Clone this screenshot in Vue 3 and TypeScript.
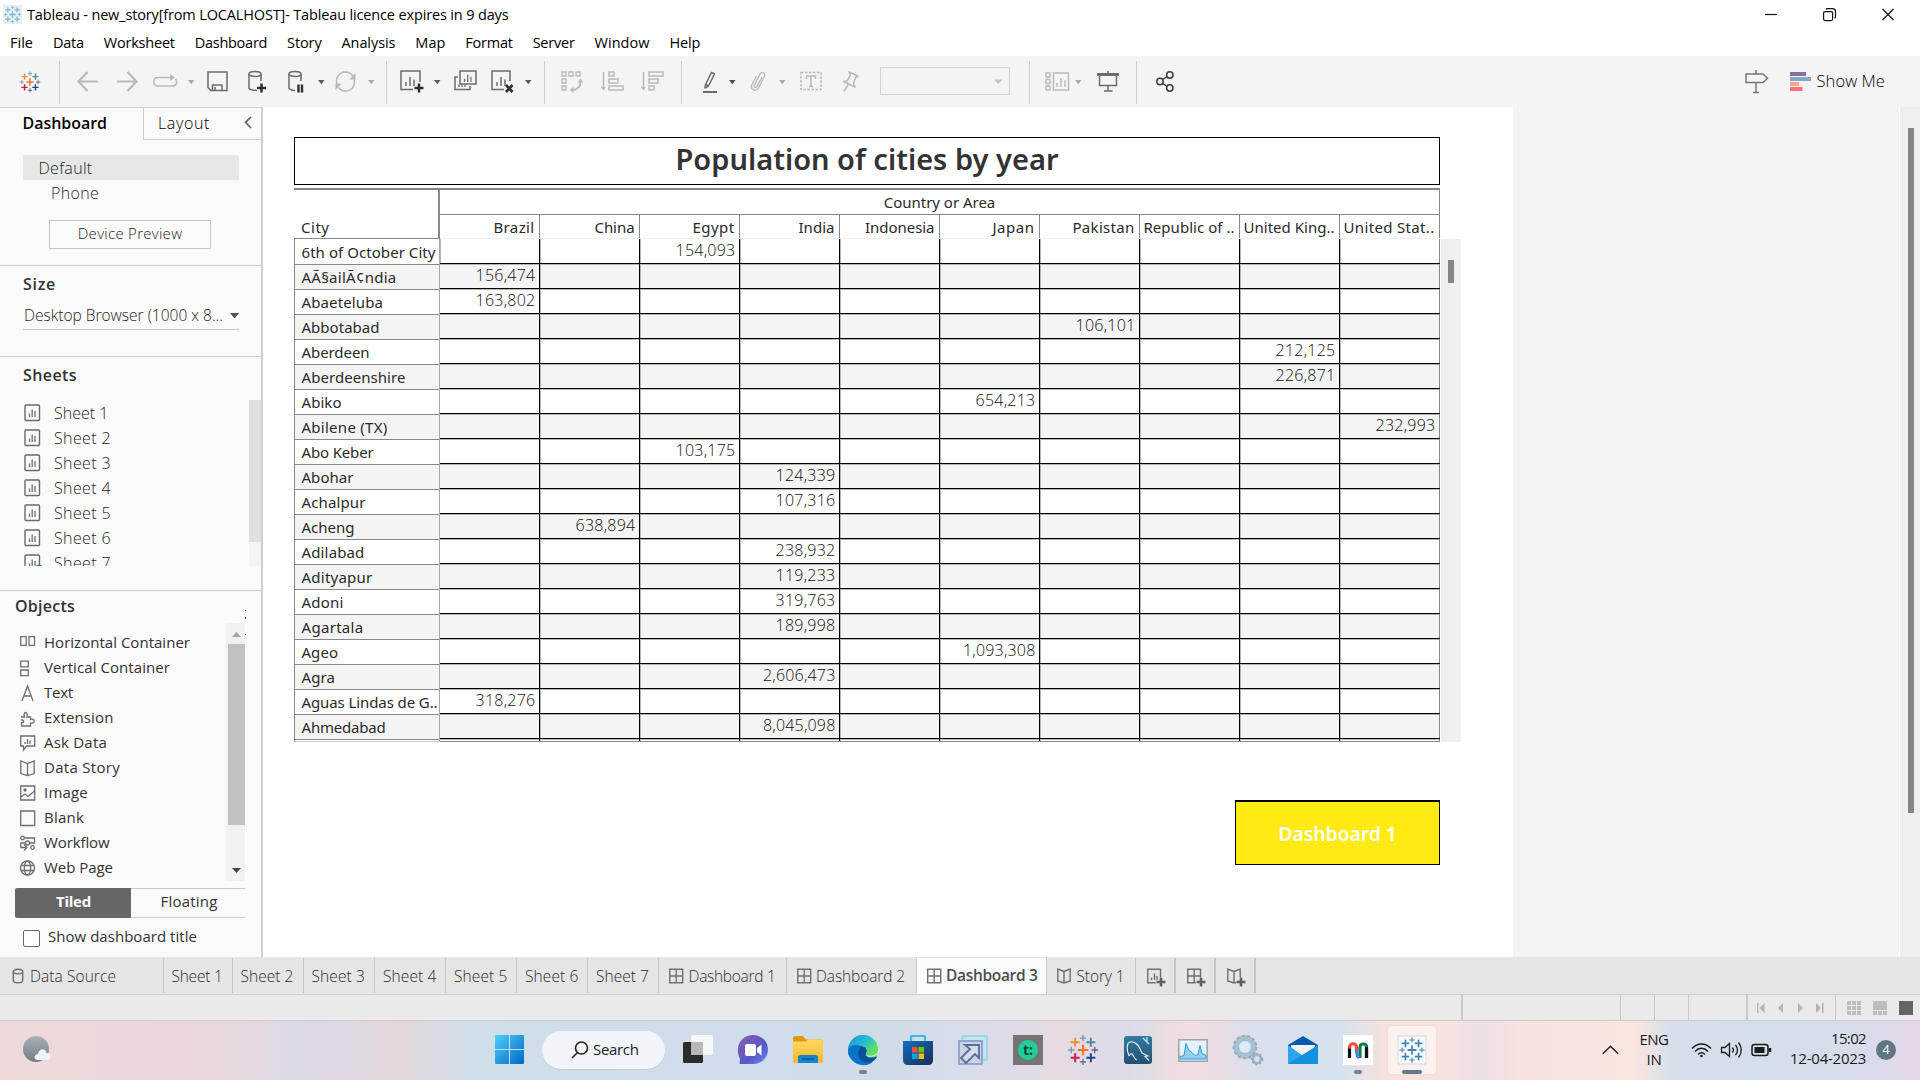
<script setup lang="ts">
// Tightens or loosens a label's tracking so that it fills its design width.
const vFit = {
  mounted(el: HTMLElement, binding: { value: number }) {
    const count = (el.textContent ?? '').length
    if (!binding.value || count < 2) return
    el.style.letterSpacing = '0px'
    const natural = el.getBoundingClientRect().width
    el.style.letterSpacing = ((binding.value - natural) / count).toFixed(3) + 'px'
  },
}

type Label = { t: string; w: number }

const menus: Label[] = [
  { t: 'File', w: 23 }, { t: 'Data', w: 31 }, { t: 'Worksheet', w: 71 }, { t: 'Dashboard', w: 72.5 },
  { t: 'Story', w: 34.5 }, { t: 'Analysis', w: 54 }, { t: 'Map', w: 30 }, { t: 'Format', w: 47.5 },
  { t: 'Server', w: 42 }, { t: 'Window', w: 55 }, { t: 'Help', w: 31 },
]

function plus(x: number, y: number, r: number, color: string, sw: number) {
  return `<path d="M${x - r} ${y}h${r * 2}M${x} ${y - r}v${r * 2}" stroke="${color}" stroke-width="${sw}" fill="none"/>`
}
function logo(cx: number, cy: number, s: number, c: string[]) {
  return (
    plus(cx, cy, 5.4 * s, c[0], 2.2 * s) +
    plus(cx - 8 * s, cy - 8 * s, 4.6 * s, c[1], 2 * s) + plus(cx + 8 * s, cy - 8 * s, 4.6 * s, c[2], 2 * s) +
    plus(cx - 8 * s, cy + 8 * s, 4.6 * s, c[3], 2 * s) + plus(cx + 8 * s, cy + 8 * s, 4.6 * s, c[4], 2 * s) +
    plus(cx, cy - 12.2 * s, 3.2 * s, c[5], 1.3 * s) + plus(cx - 12 * s, cy, 3.2 * s, c[6], 1.3 * s) +
    plus(cx + 12 * s, cy, 3.2 * s, c[7], 1.3 * s) + plus(cx, cy + 12.2 * s, 3.2 * s, c[8], 1.3 * s)
  )
}
const brand = ['#ee762e', '#eb9129', '#59879b', '#c8203f', '#1f447e', '#7099a6', '#7099a6', '#5b6591', '#5b6591']
const blue = Array(9).fill('#3f88b5')
const pale = Array(9).fill('#7fb4d6')

const G = '#6b6b6b'
const L = '#b9b9b9'
const D = '#2e2e2e'
const bars = (x: number, y: number, c: string, k = 1) =>
  `<path d="M${x} ${y - 4 * k}v${4 * k}M${x + 4 * k} ${y - 9 * k}v${9 * k}M${x + 8 * k} ${y - 6.5 * k}v${6.5 * k}" stroke="${c}" stroke-width="${1.5 * k}" fill="none"/>`
const caret = (c: string) => `<path d="M0 10h6.500l-3.200 4.200z" fill="${c}"/>`
const sep = '<path d="M.5 -9v43" stroke="#cfcfcf"/>'

// Toolbar glyphs: x is the left edge inside the bar, w the glyph width.
const tools = [
  { x: 20, w: 20, g: logo(10, 12, 0.68, brand) },
  { x: 59, w: 1, g: sep },
  { x: 77, w: 21, g: `<path d="M21 11.500H1.500M10.500 2L1.500 11.500l9 9.500" stroke="${L}" stroke-width="2.200" fill="none"/>` },
  { x: 117, w: 21, g: `<path d="M0 11.500h19.500M10.500 2l9 9.500-9 9.500" stroke="${L}" stroke-width="2.200" fill="none"/>` },
  { x: 153, w: 25, g: `<path d="M22.500 9c2.500 3 1 7-3 7H5C-.5 16-.5 7.500 5 7.500h14" stroke="${L}" stroke-width="1.500" fill="none"/><path d="M17 4l5 3.500-5 3.500z" fill="${L}"/>` },
  { x: 188, w: 7, g: caret('#ababab') },
  { x: 207, w: 21, g: `<path d="M1 2h19v18.500H4L1 17.500z" stroke="${G}" stroke-width="1.500" fill="none"/><path d="M5.500 20v-5h9.500v5M8 20v-3" stroke="${G}" stroke-width="1.500" fill="none"/>` },
  { x: 248, w: 18, g: `<path d="M13 11V4M1 4v14.500C3 20.500 5 20.500 9 20.500" stroke="${G}" stroke-width="1.500" fill="none"/><ellipse cx="7" cy="4" rx="6" ry="2.500" stroke="${G}" stroke-width="1.500" fill="none"/><path d="M13.500 13.500v9M9 18h9" stroke="${D}" stroke-width="2.500"/>` },
  { x: 288, w: 16, g: `<path d="M13 11V4M1 4v14.500C3 20.500 4 20.500 7 20.500" stroke="${G}" stroke-width="1.500" fill="none"/><ellipse cx="7" cy="4" rx="6" ry="2.500" stroke="${G}" stroke-width="1.500" fill="none"/><path d="M10.500 14.500v8M14 14.500v8" stroke="${D}" stroke-width="2.400"/>` },
  { x: 318, w: 7, g: caret('#5a5a5a') },
  { x: 335, w: 21, g: `<path d="M2 14A9 9 0 0 1 18 6M19 9a9 9 0 0 1-16 8" stroke="${L}" stroke-width="1.600" fill="none"/><path d="M20.500 3v6.500H14.500zM.5 20v-6.500H6.500z" fill="${L}"/>` },
  { x: 368, w: 7, g: caret('#ababab') },
  { x: 386, w: 1, g: sep },
  { x: 400, w: 24, g: `<path d="M20 12V1H1v18.500h12" stroke="${G}" stroke-width="1.500" fill="none"/>${bars(6, 16, G)}<path d="M19 13.500v9M14.500 18h9" stroke="${D}" stroke-width="2.500"/>` },
  { x: 434, w: 7, g: caret('#5a5a5a') },
  { x: 454, w: 23, g: `<path d="M6 1h16v13H6z" stroke="${G}" stroke-width="1.500" fill="none"/><path d="M4 7H1v12.500h15V16" stroke="${G}" stroke-width="1.500" fill="none"/>${bars(10.500, 12, G, 0.8)}<path d="M5 17v-2.500M8 17v-2.500M11 17v-2.500" stroke="${G}" stroke-width="1.300"/>` },
  { x: 491, w: 24, g: `<path d="M19 11V1H1v18.500h12" stroke="${G}" stroke-width="1.500" fill="none"/>${bars(6, 16, G)}<path d="M15 15l6.500 7M21.500 15l-6.500 7" stroke="${D}" stroke-width="2.600"/>` },
  { x: 525, w: 7, g: caret('#5a5a5a') },
  { x: 544, w: 1, g: sep },
  { x: 561, w: 22, g: `<path d="M1 2h4v4H1zM8 2h4v4H8zM15 2h4v4h-4zM1 9h4v4H1zM1 16h4v4H1z" stroke="${L}" stroke-width="1.300" fill="none"/><path d="M19.500 12c0 5-3 7.500-8 8" stroke="${L}" stroke-width="1.800" fill="none"/><path d="M16.500 12.500l3.200-4 2.500 4zM12.500 17l-4 3 4 2.800z" fill="${L}"/>` },
  { x: 601, w: 23, g: `<path d="M2.500 2v17" stroke="${L}" stroke-width="1.500"/><path d="M0 17h5l-2.500 3.500z" fill="${L}"/><path d="M8 2h5v4H8zM8 9h9v4H8zM8 16h14v4H8z" stroke="${L}" stroke-width="1.500" fill="none"/>` },
  { x: 641, w: 23, g: `<path d="M2.500 2v17" stroke="${L}" stroke-width="1.500"/><path d="M0 17h5l-2.500 3.500z" fill="${L}"/><path d="M8 2h14v4H8zM8 9h9v4H8zM8 16h5v4H8z" stroke="${L}" stroke-width="1.500" fill="none"/>` },
  { x: 681, w: 1, g: sep },
  { x: 703, w: 16, g: `<path d="M2.500 14.500L8.500 2.500l3 1.500-6 12zM2.500 14.500L2 18l3.500-2" stroke="${G}" stroke-width="1.500" fill="none" stroke-linejoin="round"/><path d="M0 22h14" stroke="${G}" stroke-width="2"/>` },
  { x: 729, w: 7, g: caret('#4a4a4a') },
  { x: 750, w: 17, g: `<path d="M12 7l-5 9.500c-1 1.800-3.500.5-2.500-1.500L10 4c1.500-3 6-.8 4.500 2.300L8.500 18c-2.500 4.500-9 1.500-6.500-3.500L6.500 6" stroke="${L}" stroke-width="1.400" fill="none"/>` },
  { x: 779, w: 7, g: caret('#ababab') },
  { x: 800, w: 22, g: `<path d="M1 2.500h20v17H1z" stroke="${L}" stroke-width="1.500" stroke-dasharray="2.500 1.500" fill="none"/><path d="M6.500 9V6h9v3M11 6v10.500M9 16.500h4" stroke="${L}" stroke-width="1.500" fill="none"/>` },
  { x: 842, w: 17, g: `<path d="M7 2l9 4-2.500 1.500-2 6L13 17 1.500 11.500l4-.8 3-6zM6.500 14L2 21.500" stroke="${L}" stroke-width="1.500" fill="none" stroke-linejoin="round"/>` },
  { x: 880, w: 130, g: `<path d="M.5 -2.500h129v27H.5z" stroke="#d2d2d2" fill="none"/><path d="M114 9.500h8.500l-4.200 4.500z" fill="#c4c4c4"/>` },
  { x: 1029, w: 1, g: sep },
  { x: 1045, w: 24, g: `<path d="M1 3h4v4H1zM1 9.500h4v4H1zM1 16h4v4H1zM8.500 3H23.500v17H8.500z" stroke="${L}" stroke-width="1.400" fill="none"/>${bars(12, 17, L)}` },
  { x: 1075, w: 7, g: caret('#ababab') },
  { x: 1097, w: 22, g: `<path d="M0 4.500h22" stroke="${G}" stroke-width="3"/><path d="M11 1v3M2.500 5v10.500h17V5M11 15.500V21M7 21h8.500" stroke="${G}" stroke-width="1.500" fill="none"/>` },
  { x: 1136, w: 1, g: sep },
  { x: 1156, w: 18, g: `<g stroke="#3c3c3c" stroke-width="1.500" fill="none"><circle cx="4" cy="11.500" r="3.200"/><circle cx="13.800" cy="5" r="3.200"/><circle cx="13.800" cy="18" r="3.200"/><path d="M6.700 9.500l4.500-3M6.700 13.500l4.500 3"/></g>` },
].map((t, i, all) => ({ ...t, gap: i ? t.x - all[i - 1].x - all[i - 1].w : t.x }))

const sheets = [1, 2, 3, 4, 5, 6, 7].map((n) => ({ t: 'Sheet ' + n, w: n === 1 ? 54.5 : 57 }))

const objects = [
  { t: 'Horizontal Container', w: 146, g: '<path d="M.7 1.700h5.500v8.600H.7zM9 1.700h5.500v8.600H9z"/>' },
  { t: 'Vertical Container', w: 126, g: '<path d="M.7 1.200h7.600v5.600H.7zM.7 10h7.600v5.600H.7z"/>' },
  { t: 'Text', w: 29, g: '<path d="M2 16L7.500 1 13 16M4 11h7"/>' },
  { t: 'Extension', w: 69.5, g: '<path d="M1 7h3.500C2.500 1 8.500 1 7 7h3.500v2.500c5-2 5 5 0 3.500v3H1.500v-3.500c3 1 3-3.500-.8-2.500"/>' },
  { t: 'Ask Data', w: 63, g: '<path d="M.7 1h14v10H6.500L3.500 15v-4H.7zM5 9V7M7.500 9V4M10 9V5.500"/>' },
  { t: 'Data Story', w: 76, g: '<path d="M7.500 3.500L.8 1v12.500l6.700 2 6.700-2V1zM7.500 3.500v12"/>' },
  { t: 'Image', w: 44, g: '<path d="M.7 1h14v14H.7zM.7 12l4.300-3 3 2.500L14.500 6"/><circle cx="5" cy="5" r="1" fill="#666"/>' },
  { t: 'Blank', w: 40, g: '<path d="M.7 1h14v14.500H.7z"/>' },
  { t: 'Workflow', w: 65.5, g: '<circle cx="2.500" cy="3" r="1.800"/><circle cx="7.500" cy="8" r="2"/><circle cx="12.500" cy="12.500" r="1.800"/><path d="M4.500 3h10v5h-5M5.500 8H.8v4.500h5M4 9.500l3 3-3 3"/>' },
  { t: 'Web Page', w: 69, g: '<circle cx="7.500" cy="8" r="7"/><ellipse cx="7.500" cy="8" rx="3.200" ry="7"/><path d="M1.300 5.500h12.500M1.300 10.500h12.500"/>' },
]

const columns: Label[] = [
  { t: 'Brazil', w: 41 }, { t: 'China', w: 40 }, { t: 'Egypt', w: 42 }, { t: 'India', w: 36 },
  { t: 'Indonesia', w: 69.5 }, { t: 'Japan', w: 42 }, { t: 'Pakistan', w: 62 },
  { t: 'Republic of ..', w: 91 }, { t: 'United King..', w: 91 }, { t: 'United Stat..', w: 91 },
]
type Row = { city: string; w: number; col: number; value: string }
const rows: Row[] = ([
  ['6th of October City', 134, 2, '154,093'],
  ['AÃ§ailÃ¢ndia', 95, 0, '156,474'],
  ['Abaeteluba', 81.5, 0, '163,802'],
  ['Abbotabad', 78, 6, '106,101'],
  ['Aberdeen', 68, 8, '212,125'],
  ['Aberdeenshire', 104, 8, '226,871'],
  ['Abiko', 40, 5, '654,213'],
  ['Abilene (TX)', 86, 9, '232,993'],
  ['Abo Keber', 72, 2, '103,175'],
  ['Abohar', 52, 3, '124,339'],
  ['Achalpur', 64, 3, '107,316'],
  ['Acheng', 53, 1, '638,894'],
  ['Adilabad', 63, 3, '238,932'],
  ['Adityapur', 71, 3, '119,233'],
  ['Adoni', 42, 3, '319,763'],
  ['Agartala', 62, 3, '189,998'],
  ['Ageo', 36.5, 5, '1,093,308'],
  ['Agra', 33.5, 3, '2,606,473'],
  ['Aguas Lindas de G..', 136, 0, '318,276'],
  ['Ahmedabad', 84, 3, '8,045,098'],
] as [string, number, number, string][]).map(([city, w, col, value]) => ({ city, w, col, value }))

const gridIcon = '<path d="M.7 1.200h13v13.600H.7zM7.200 1.200v13.600M.7 8h13"/>'
const bookIcon = '<path d="M7 3.500L.8 1v12l6.200 2 6.200-2V1zM7 3.500v11.500"/>'
const sourceIcon = '<ellipse cx="6" cy="3.500" rx="4.700" ry="2.200"/><path d="M1.300 3.500v9c0 3 9.400 3 9.400 0v-9"/>'
// Bottom tabs: box width, padding before the content, glyph, label.
const tabs = [
  { w: 164, pad: 12, icon: sourceIcon, t: 'Data Source', tw: 86, gap: 3, on: false },
  { w: 69, pad: 7.5, icon: '', t: 'Sheet 1', tw: 51, gap: 0, on: false },
  { w: 71, pad: 7.5, icon: '', t: 'Sheet 2', tw: 53, gap: 0, on: false },
  { w: 71, pad: 7.5, icon: '', t: 'Sheet 3', tw: 53.5, gap: 0, on: false },
  { w: 71, pad: 8, icon: '', t: 'Sheet 4', tw: 53.5, gap: 0, on: false },
  { w: 71, pad: 8, icon: '', t: 'Sheet 5', tw: 53.5, gap: 0, on: false },
  { w: 71, pad: 8, icon: '', t: 'Sheet 6', tw: 53.5, gap: 0, on: false },
  { w: 71, pad: 8, icon: '', t: 'Sheet 7', tw: 53, gap: 0, on: false },
  { w: 128, pad: 10, icon: gridIcon, t: 'Dashboard 1', tw: 87, gap: 4.5, on: false },
  { w: 130, pad: 10, icon: gridIcon, t: 'Dashboard 2', tw: 89, gap: 4, on: false },
  { w: 130, pad: 10, icon: gridIcon, t: 'Dashboard 3', tw: 91.5, gap: 4, on: true },
  { w: 89, pad: 10, icon: bookIcon, t: 'Story 1', tw: 48, gap: 4.5, on: false },
]
const bold = '<path d="M14 9.500v9M9.500 14h9" stroke="#606060" stroke-width="2.600"/>'
const addTabs = [
  '<path d="M13.500 9V1.200H.7v13.600h8M4.500 12V9.500M7.500 12V5.500M10 12V8"/>' + bold,
  '<path d="M13.500 9V1.200H.7v13.600h8M7.200 1.200V14M.7 8h13"/>' + bold,
  '<path d="M7 3.500L.8 1v12l6.200 2 2-.5M7 3.500L13.200 1v8M7 3.500v11.500"/>' + bold,
]

const apps = [
  // task view
  '<rect x="0" y="7" width="20" height="21" rx="1.500" fill="#2b2b2b"/><rect x="8" y="0" width="22" height="20" rx="1.500" fill="#f7f7f7"/><path d="M8 7h12v13H8z" fill="#b7b7b7"/>',
  // chat
  '<path d="M15 0c8 0 15 6 15 14.500S23 29 15 29H1.500L2 24C-4 12 3 0 15 0z" fill="url(#chat)"/><rect x="7" y="9" width="11" height="12" rx="2" fill="#fff"/><path d="M19 13l4.500-3.500v11L19 17z" fill="#fff"/>',
  // explorer
  '<path d="M0 3q0-2 2-2h8l3 3.500h15q2 0 2 2V10H0z" fill="#dd9b05"/><path d="M0 6.500h13l2-2h13q2 0 2 2V26q0 2-2 2H2q-2 0-2-2z" fill="url(#folder)"/><path d="M5 28v-6q0-2 2-2h16q2 0 2 2v6z" fill="#1583cf"/><path d="M9 24h12" stroke="#0a5a9c" stroke-width="2"/>',
  // edge
  '<circle cx="15" cy="15" r="15" fill="url(#edgeTop)"/><path d="M0 16C1 8 9 8 13 11c-3 3-4 8 0 13 3 4 8 4.500 12 2.500C20 32 10 31 5 26 1 22 0 19 0 16z" fill="#0c72c8"/><path d="M13 11c-4 4-4 11 1 15 4 3 9 2 12-.5 2-2 3-3 3-4-5 2-10 1-11-1-1-1.500 1-2 1-5 0-3-3-5-6-4.500z" fill="#0b4f9b"/><path d="M15 12c4 0 5 4 3 7 0 3 5 3.500 9 2 2-.5 3-3.500 3-5" fill="#dbe8f1"/><path d="M15.500 12c3 0 4 2.500 3 4.500-1 2-1 3.500 1.500 4 5 1 10-1 10-6C30 6 23 0 15 0 8 0 1 6 0 14c3-5 11-5 15.500-2z" fill="url(#edgeTop)"/>',
  // store
  '<path d="M8 6V2q0-1 1-1h12q1 0 1 1v4" stroke="#35b8ec" stroke-width="2.200" fill="none"/><path d="M0 6h30v19q0 5-5 5H5q-5 0-5-5z" fill="url(#store)"/><path d="M9 12h5.500v5.500H9z" fill="#f35325"/><path d="M15.500 12H21v5.500h-5.500z" fill="#81bc06"/><path d="M9 18.500h5.500V24H9z" fill="#05a6f0"/><path d="M15.500 18.500H21V24h-5.500z" fill="#ffba08"/>',
  // shortcut tool
  '<path d="M4.500 1H29v24h-5V6H4.500z" fill="#c7e3f0" stroke="#8fd2e6" stroke-width="1.500"/><path d="M1 6h23v23H1z" fill="#c9d3e6" stroke="#8196c8" stroke-width="1.500"/><path d="M7 10h14v13l-4-4-9 9-5-5 9-9z" fill="#d5dceb" stroke="#5b6a98" stroke-width="1.800"/>',
  // t: tile
  '<path d="M0 0h30v30H0z" fill="#747474"/><circle cx="15" cy="15" r="10" fill="#1fce9b"/><text x="15" y="20" font-size="14" font-weight="700" text-anchor="middle" fill="#15463a" font-family="Noto Sans, sans-serif">t:</text>',
  logo(15, 15, 0.98, brand),
  // database client
  '<rect x="1" y="1" width="28" height="28" rx="3" fill="url(#sql)"/><path d="M6 21C3 13 4 8 7 7c7-1 10 6 12 11l6 3-3 .5 4 4M6 21c1-2 2-3 3-2 2 2 3 6 5 6M20 3l3 3 3 3M24 2v4" stroke="#dbe8ef" stroke-width="1.200" fill="none"/>',
  // monitor
  '<path d="M.8 4.800h28.400v21.400H.8z" fill="#e4f2fb" stroke="#9aa5ad" stroke-width="1.500"/><path d="M2 24V21.500l4-1 2-12 3 7 3 2 3 3 3-1 2-9 2 8 4 2V24z" fill="#8fd0f5" stroke="#3f9ad2"/>',
  // gears
  '<circle cx="12" cy="12" r="9" fill="none" stroke="#a9c0d0" stroke-width="5"/><circle cx="12" cy="12" r="11.300" fill="none" stroke="#8fa9bb" stroke-width="2" stroke-dasharray="3 2.500"/><circle cx="12" cy="12" r="6.500" fill="#e3e7ef" stroke="#7fc0df"/><circle cx="24" cy="24" r="4" fill="#dfe4ec" stroke="#9db3c4" stroke-width="2.500"/><circle cx="24" cy="24" r="5.500" fill="none" stroke="#8fa9bb" stroke-width="1.500" stroke-dasharray="2 2"/>',
  // mail
  '<path d="M0 10L15 1l15 9v3H0z" fill="#0a5aab"/><path d="M3 10h24v9H3z" fill="#f2f2f2"/><path d="M0 10l15 11 15-11v18q0 1-1 1H1q-1 0-1-1z" fill="#2ba6e8"/><path d="M0 29L30 10v18q0 1-1 1z" fill="#1690dc"/>',
  // m tile
  '<path d="M0 0h30v30H0z" fill="#fff"/><g fill="none" stroke-width="3.200"><path d="M6.500 12v11" stroke="#111"/><path d="M23.500 12v11" stroke="#111"/><path d="M17 23V12c0-4 6.500-4 6.500 0" stroke="#0b8043"/><path d="M23.500 14v9" stroke="#111"/><path d="M6.500 13.500v-1c0-5 7-5 7 0v3" stroke="#ff4848"/><path d="M13.500 15c0 3 0 6 2.500 8" stroke="#4483f4"/></g>',
  '<path d="M1 1h28v28H1z" fill="#f6f8fa" stroke="#d5d8da"/>' + logo(15, 15, 0.82, blue),
]
const cells = [0, 1, 2, 3, 4, 5, 6, 7, 8, 9]
</script>

<template>
  <div class="screen">
    <header class="titlebar">
      <svg class="app-mark" width="19" height="19" viewBox="0 0 19 19">
        <rect width="19" height="19" fill="#e9eef2" /><g v-html="logo(9.5, 9.5, 0.58, pale)" />
      </svg>
      <span v-fit="481.500" class="caption">Tableau - new_story[from LOCALHOST]- Tableau licence expires in 9 days</span>
      <svg class="winbtns" width="130" height="14" viewBox="0 0 130 14" fill="none" stroke="#111" stroke-width="1.2">
        <path d="M0 6.500h12" />
        <rect x="58.600" y="3.600" width="9" height="9" rx="1.500" /><path d="M61 1.500q.5-.9 1.500-.9h5q3 0 3 3v5q0 1-1 1.500" />
        <path d="M117.500 1l11 11M128.500 1l-11 11" />
      </svg>
    </header>

    <nav class="menubar">
      <span v-for="m in menus" :key="m.t" v-fit="m.w">{{ m.t }}</span>
    </nav>

    <div class="toolbar">
      <svg v-for="t in tools" :key="t.x" class="tool" :width="t.w" height="24" :viewBox="`0 0 ${t.w} 24`" :style="{ marginLeft: t.gap + 'px' }" v-html="t.g" />
      <div class="showme">
        <svg width="24" height="24" viewBox="0 0 24 24" fill="none" stroke="#777" stroke-width="1.500">
          <path d="M1 4h17l4.500 4.300L18 12.500H1zM11 0v4M11 12.500v10M8 22.500h6" />
        </svg>
        <svg class="bars" width="21" height="20" viewBox="0 0 21 20">
          <path d="M0 0h16v4H0z" fill="#85729b" /><path d="M0 5h21v4H0z" fill="#86a5cc" />
          <path d="M0 10h9v4H0z" fill="#f2a982" /><path d="M0 15h12.500v4H0z" fill="#f96f7c" />
        </svg>
        <span v-fit="68.5">Show Me</span>
      </div>
    </div>

    <main class="work">
      <aside class="side">
        <div class="sidetabs">
          <div class="tab-dash"><b v-fit="84.500">Dashboard</b></div>
          <div class="tab-layout">
            <span v-fit="52">Layout</span>
            <svg width="8" height="13" viewBox="0 0 8 13"><path d="M7 .8L1.500 6.300 7 12" fill="none" stroke="#666" stroke-width="1.700" /></svg>
          </div>
        </div>
        <section class="devices">
          <div class="device on"><span v-fit="54">Default</span></div>
          <div class="device sub"><span v-fit="48">Phone</span></div>
          <div class="preview"><span v-fit="104.500">Device Preview</span></div>
        </section>
        <section class="size">
          <h3><span v-fit="33">Size</span></h3>
          <div class="select">
            <span v-fit="199">Desktop Browser (1000 x 8...</span>
            <svg width="9" height="6" viewBox="0 0 9 6"><path d="M0 0h9L4.500 5.500z" fill="#555" /></svg>
          </div>
        </section>
        <section class="sheets">
          <h3><span v-fit="54">Sheets</span></h3>
          <div class="sheetbox">
            <div class="sheetlist">
              <div v-for="s in sheets" :key="s.t" class="sheet">
                <svg width="18" height="18" viewBox="0 0 18 18" fill="none">
                  <rect x="1" y="1" width="14.500" height="15.500" rx="1" stroke="#6a6a6a" stroke-width="1.400" />
                  <path d="M5.500 13V9.500M8.200 13V5.500M11 13V7" stroke="#777" stroke-width="1.400" />
                  <circle v-if="s.t === 'Sheet 7'" cx="15" cy="14" r="3.500" fill="#2f7f9f" />
                </svg>
                <span v-fit="s.w">{{ s.t }}</span>
              </div>
            </div>
            <div class="sheetscroll"><i /></div>
          </div>
        </section>
        <section class="objects">
          <h3><span v-fit="60">Objects</span></h3>
          <svg class="specks" width="2" height="40" viewBox="0 0 2 40"><path d="M0 9h1v1H0z" fill="#222" /><path d="M0 16h1v2H0z" fill="#a0122a" /><path d="M0 33h1v1H0z" fill="#c33" /></svg>
          <div class="objbox">
            <div class="objlist">
              <div v-for="o in objects" :key="o.t" class="object">
                <svg width="16" height="17" viewBox="0 0 16 17" fill="none" stroke="#6e6e6e" stroke-width="1.300" v-html="o.g" />
                <span v-fit="o.w">{{ o.t }}</span>
              </div>
            </div>
            <div class="objscroll">
              <svg width="9" height="5" viewBox="0 0 9 5"><path d="M0 5h9L4.500 0z" fill="#a3a3a3" /></svg>
              <i />
              <svg class="down" width="9" height="5" viewBox="0 0 9 5"><path d="M0 0h9L4.500 5z" fill="#444" /></svg>
            </div>
          </div>
          <div class="toggle">
            <div class="tiled"><b v-fit="35">Tiled</b></div>
            <div class="floating"><span v-fit="57">Floating</span></div>
          </div>
          <div class="check"><i /><span v-fit="149">Show dashboard title</span></div>
        </section>
      </aside>

      <div class="canvas">
        <div class="dash">
          <div class="title"><span v-fit="383">Population of cities by year</span></div>
          <div class="head">
            <div class="head-city"><span v-fit="28.500">City</span></div>
            <div class="head-right">
              <div class="head-top"><span v-fit="111.500">Country or Area</span></div>
              <div class="head-cols">
                <div v-for="c in columns" :key="c.t"><span v-fit="c.w">{{ c.t }}</span></div>
              </div>
            </div>
          </div>
          <div class="body">
            <div class="cities">
              <div v-for="(r, i) in rows" :key="r.city" :class="['city', { alt: i % 2, first: !i }]"><span v-fit="r.w">{{ r.city }}</span></div>
              <div class="city-rest" />
            </div>
            <div class="grid">
              <div v-for="(r, i) in rows" :key="r.city" :class="['line', { alt: i % 2, first: !i }]">
                <div v-for="c in cells" :key="c" class="cell"><span v-if="c === r.col" v-fit="r.value.length > 7 ? 72.5 : 60">{{ r.value }}</span></div>
              </div>
              <div class="line rest"><div v-for="c in cells" :key="c" class="cell" /></div>
            </div>
            <div class="vscroll"><i /></div>
          </div>
          <div class="goto"><span v-fit="118.500">Dashboard 1</span></div>
        </div>
        <div class="pagescroll"><i /></div>
      </div>
    </main>

    <div class="tabs">
      <div v-for="t in tabs" :key="t.t" :class="['btab', { on: t.on }]" :style="{ width: t.w + 'px', paddingLeft: t.pad + 'px' }">
        <svg v-if="t.icon" width="15" height="16" viewBox="0 0 15 16" fill="none" stroke="#707070" stroke-width="1.400" :style="{ marginRight: t.gap + 'px' }" v-html="t.icon" />
        <span v-fit="t.tw">{{ t.t }}</span>
      </div>
      <div v-for="(a, i) in addTabs" :key="i" class="btab add">
        <svg width="19" height="19" viewBox="0 0 19 19" fill="none" stroke="#707070" stroke-width="1.400" v-html="a" />
      </div>
    </div>

    <div class="status">
      <div class="st s1" /><div class="st s2" /><div class="st s3" /><div class="st s4" /><div class="st s5" />
      <div class="st s6">
        <svg width="68" height="10" viewBox="0 0 68 10" fill="#b4b4b4"><path d="M0 0h1.500v10H0zM7.500 0v10L2.500 5zM26 0v10l-5-5zM41 0v10l5-5zM59 0v10l5-5zM65 0h1.500v10H65z" /></svg>
      </div>
      <svg class="views" width="67" height="14" viewBox="0 0 67 14" fill="#bdbdbd">
        <path d="M0 0h4v4H0zM5 0h4v4H5zM10 0h4v4h-4zM0 5h4v4H0zM5 5h4v4H5zM10 5h4v4h-4zM0 10h4v4H0zM5 10h4v4H5zM10 10h4v4h-4zM26 0h14v9H26zM26 10h4v4h-4zM31 10h4v4h-4zM36 10h4v4h-4z" />
        <path d="M52 0h14v14H52z" fill="#656565" />
      </svg>
    </div>

    <footer class="taskbar">
      <svg width="0" height="0" class="defs">
        <defs>
          <linearGradient id="win" x1="0" y1="0" x2="1" y2="1"><stop offset="0" stop-color="#4fd0fb" /><stop offset="1" stop-color="#0067c4" /></linearGradient>
          <linearGradient id="chat" x1="0" y1="0" x2="1" y2="1"><stop offset="0" stop-color="#8b5fb0" /><stop offset=".6" stop-color="#5558c8" /><stop offset="1" stop-color="#6f8ff0" /></linearGradient>
          <linearGradient id="folder" x1="0" y1="0" x2="0" y2="1"><stop offset="0" stop-color="#ffd95f" /><stop offset="1" stop-color="#fcb82b" /></linearGradient>
          <linearGradient id="edgeTop" x1="0" y1="0" x2="1" y2=".5"><stop offset="0" stop-color="#1c8fdd" /><stop offset=".6" stop-color="#27c0d0" /><stop offset="1" stop-color="#63e25a" /></linearGradient>
          <linearGradient id="store" x1="0" y1="0" x2="1" y2="1"><stop offset="0" stop-color="#1170bd" /><stop offset="1" stop-color="#1b2c57" /></linearGradient>
          <linearGradient id="sql" x1="0" y1="0" x2="0" y2="1"><stop offset="0" stop-color="#337ba3" /><stop offset="1" stop-color="#23506d" /></linearGradient>
          <linearGradient id="moon" x1="0" y1="0" x2="0" y2="1"><stop offset="0" stop-color="#a9b2b9" /><stop offset="1" stop-color="#737b82" /></linearGradient>
        </defs>
      </svg>
      <svg class="weather" width="28" height="28" viewBox="0 0 28 28">
        <circle cx="13" cy="13" r="13" fill="url(#moon)" /><path d="M15 24c-5 0-4-6 0-6 1-6 8-6 8.500-1 6 0 5 7 1 7z" fill="#f0f3f5" />
      </svg>
      <svg class="start" width="29" height="29" viewBox="0 0 29 29"><path d="M0 1q0-1 1-1h13v14H0zM15 0h13q1 0 1 1v13H15zM0 15h14v14H1q-1 0-1-1zM15 15h14v13q0 1-1 1H15z" fill="url(#win)" /></svg>
      <div class="search">
        <svg width="18" height="18" viewBox="0 0 18 18" fill="none" stroke="#222" stroke-width="1.600"><circle cx="10.500" cy="7" r="6" /><path d="M6.500 11.500L1 17" /></svg>
        <span v-fit="45.500">Search</span>
      </div>
      <div class="apps">
        <div v-for="(a, i) in apps" :key="i" :class="['app', { active: i === 13, open: i === 3 || i === 12 }]">
          <svg width="30" height="30" viewBox="0 0 30 30" v-html="a" />
        </div>
      </div>
      <div class="tray">
        <svg class="up" width="17" height="10" viewBox="0 0 17 10"><path d="M.8 8.800L8.500 1.200l7.700 7.600" fill="none" stroke="#222" stroke-width="1.500" /></svg>
        <div class="lang"><span v-fit="29">ENG</span><span v-fit="15">IN</span></div>
        <svg class="sys" width="82" height="20" viewBox="0 0 82 20" fill="none" stroke="#1c1c1c" stroke-width="1.500">
          <path d="M1 8.500c5.500-6 13.500-6 19 0M4 11.500c4-4.200 9-4.200 13 0M7 14.500c2.200-2.200 4.800-2.200 7 0" /><circle cx="10.500" cy="16" r="1.300" fill="#1c1c1c" stroke="none" />
          <path d="M30.500 7.500h3.500l4.500-4v13l-4.500-4h-3.500z" stroke-width="1.300" /><path d="M41.500 7.500q2 2.500 0 5M44.500 5q4 5 0 10M47.500 2.500q5.500 7.500 0 15" stroke-width="1.300" />
          <rect x="61" y="4.500" width="16" height="11" rx="2.500" /><path d="M63.500 7h10v6h-10z" fill="#1c1c1c" stroke="none" /><path d="M79 8v4" stroke-width="2.500" />
        </svg>
        <div class="clock"><span v-fit="35">15:02</span><span v-fit="76">12-04-2023</span></div>
        <div class="badge">4</div>
      </div>
    </footer>
  </div>
</template>

<style>
body { background: #fff; overflow: hidden; }
</style>

<style scoped>
* { box-sizing: border-box; }
.screen { width: 1920px; height: 1080px; display: flex; flex-direction: column; font-family: "Open Sans", "Noto Sans", sans-serif; font-size: 15px; color: #2a2a2a; overflow: hidden; }
span, b { display: inline-block; white-space: nowrap; }
svg { display: block; flex: none; overflow: visible; }
i { display: block; }

.titlebar { height: 29px; display: flex; align-items: center; padding-left: 3px; background: #fff; color: #000; }
.app-mark { margin-right: 5px; }
.caption { font-size: 14.500px; line-height: 28px; }
.winbtns { margin-left: auto; margin-right: 25px; }
.menubar { height: 27px; display: flex; gap: 19.900px; padding-left: 10px; line-height: 27px; font-size: 14.500px; color: #000; background: #fff; }
.toolbar { height: 51px; display: flex; align-items: flex-start; padding-top: 14px; background: #f4f4f4; }
.showme { display: flex; margin-left: auto; width: 175px; color: #000; font-size: 16.500px; font-weight: 300; line-height: 22px; }
.showme .bars { margin: 2px 5.500px 0 21px; }

.work { height: 850px; display: flex; }
.side { width: 263px; border-right: 2px solid #cfcfcf; border-top: 1px solid #ccc; background: #fafafa; font-size: 16px; font-weight: 300; color: #1e1e1e; }
.sidetabs { display: flex; height: 32px; line-height: 30px; color: #000; }
.tab-dash { width: 143px; padding-left: 22.500px; }
.tab-dash b { font-weight: 600; }
.tab-layout { flex: 1; display: flex; justify-content: space-between; padding: 0 9px 0 14px; border-left: 1px solid #ccc; border-bottom: 1px solid #ccc; }
.tab-layout svg { margin-top: 8px; }
section { border-bottom: 1px solid #ccc; }
.devices { height: 126px; padding: 15px 22px 0 23px; }
.device { height: 25px; line-height: 27px; padding-left: 15.500px; }
.device.on { background: #e6e6e6; }
.device.sub { padding-left: 28px; }
.preview { width: 162px; height: 29px; margin: 15px 0 0 26px; border: 1px solid #c6c6c6; text-align: center; line-height: 25px; font-size: 15px; }
h3 { margin: 0; font-size: 16px; font-weight: 600; line-height: 24px; color: #333; }
.size { height: 91px; padding: 6px 22px 0 23px; }
.select { height: 28px; margin-top: 6px; padding-left: 1px; display: flex; justify-content: space-between; align-items: center; border-bottom: 1px solid #c6c6c6; line-height: 26px; font-size: 15.500px; }
.select span { margin-top: -1px; }
.sheets { height: 234px; padding-top: 6px; }
.sheets h3 { padding-left: 23px; }
.sheetbox { display: flex; justify-content: space-between; height: 166px; margin-top: 13px; overflow: hidden; }
.sheet { display: flex; height: 25px; padding-left: 24px; line-height: 27px; }
.sheet svg { margin: 4px 12px 0 0; }
.sheetscroll { width: 12px; background: #f4f4f4; }
.sheetscroll i { height: 142px; background: #e0e0e0; }
.objects { position: relative; border: 0; padding: 2px 0 0 15px; font-size: 15px; font-weight: 400; color: #333; }
.objects h3 { line-height: 26px; height: 24px; font-weight: 600; }
.specks { position: absolute; left: 245px; top: 10px; }
.objbox { display: flex; justify-content: space-between; width: 231px; height: 258px; margin-top: 6px; border-right: 1px solid #fff; }
.objlist { padding-top: 6px; }
.object { display: flex; height: 25px; line-height: 27px; padding-left: 5px; }
.object svg { margin: 6px 8px 0 0; }
.objscroll { width: 19px; padding: 9px 0 0 6px; background: #f1f1f1; }
.objscroll i { width: 17px; height: 181px; margin: 7px 0 0 -4px; background: #c1c1c1; }
.objscroll .down { margin-top: 43px; }
.toggle { display: flex; width: 230px; height: 30px; margin-top: 7px; line-height: 27px; text-align: center; }
.tiled { width: 116px; background: #666; color: #fff; border-radius: 2px 0 0 2px; padding-left: 1px; }
.tiled b { font-weight: 700; }
.floating { flex: 1; padding-left: 2px; line-height: 25px; border-top: 1px solid #ccc; border-bottom: 1px solid #ccc; }
.check { display: flex; align-items: center; margin-top: 9px; height: 20px; padding-left: 8px; line-height: 20px; }
.check i { width: 17px; height: 17px; margin: 3px 8px 0 0; border: 1px solid #6a6a6a; border-radius: 2px; background: #fff; }
.check span { margin-top: -2px; }

.canvas { flex: 1; display: flex; justify-content: space-between; background: #f4f4f4; }
.dash { width: 1250px; padding: 30px 0 0 31px; background: #fff; }
.title { width: 1146px; height: 48px; border: 1px solid #000; text-align: center; font: 600 29px/41px "Noto Sans", sans-serif; color: #333; }
.head { display: flex; width: 1146px; height: 51px; margin-top: 3px; border-top: 2px solid #888; font: 400 15px/24px "Noto Sans", sans-serif; }
.head-city { width: 146px; padding: 25px 0 0 7px; line-height: 24px; border-right: 2px solid #888; border-bottom: 1px solid #888; }
.head-top { width: 1000px; height: 25px; text-align: center; border-bottom: 1px solid #888; border-right: 1px solid #888; }
.head-cols { display: flex; height: 24px; border-bottom: 1px solid #f0f0f0; }
.head-cols div { width: 100px; padding-right: 4.500px; text-align: right; border-right: 1px solid #888; }
.body { display: flex; height: 503px; }
.cities { width: 146px; border-left: 1px solid #888; border-right: 1px solid #aaa; border-bottom: 1px solid #ccc; font: 400 15px/24px "Noto Sans", sans-serif; }
.city { height: 25px; padding-left: 6.500px; border-bottom: 1px solid #888; overflow: hidden; }
.city.first { height: 26px; line-height: 26px; }
.alt { background: #f4f4f4; }
.grid { width: 1000px; }
.line { display: flex; height: 25px; border-bottom: 1px solid #000; }
.cell { width: 100px; padding-right: 3.500px; text-align: right; border-right: 1px solid #000; box-shadow: inset 1px 1px #b4b4b4; font: 300 16px/23px "Open Sans", sans-serif; color: #111; }
.line.first .cell { box-shadow: inset 1px 0 #b4b4b4; }
.cell:first-child { box-shadow: inset 0 1px #b4b4b4; }
.cell:last-child { border-right-color: #888; }
.line.rest { height: 3px; border-bottom-color: #888; }
.vscroll { width: 20px; margin-left: 1px; padding: 21px 0 0 7px; background: #efefef; }
.vscroll i { width: 6px; height: 23px; background: #858585; }
.goto { width: 205px; height: 65px; margin: 58px 0 0 941px; border: 1px solid #000; border-top-width: 2px; background: #ffea13; color: #fff; text-align: center; font: 600 19.500px/64px "Noto Sans", sans-serif; }
.pagescroll { width: 21px; padding: 21px 0 0 8px; background: #efefef; border-left: 1px solid #fff; }
.pagescroll i { width: 6px; height: 685px; background: #858585; }

.tabs { display: flex; height: 38px; padding-bottom: 1px; background: #e5e5e5; border-bottom: 1px solid #cfcfcf; font-weight: 300; font-size: 15.500px; color: #2c2c2c; }
.btab { display: flex; align-items: center; margin-top: 1px; height: 35px; border-right: 1px solid #c6c6c6; }
.btab.on { background: #fafafa; height: 36px; font-weight: 600; color: #4c4c4c; }
.btab.on span { margin-top: -3px; }
.btab.on svg { margin-top: -1px; }
.btab.add { width: 40px; padding: 3px 0 0 11px; border-right-width: 2px; }
.status { display: flex; height: 25px; background: #eaeaea; }
.st { border-right: 1px solid #c9c9c9; }
.s1 { width: 1463px; border-right-width: 2px; }
.s2 { width: 158px; }
.s3, .s4 { width: 34px; }
.s5 { width: 59px; border-right-width: 2px; }
.s6 { width: 88px; padding: 8px 0 0 9px; }
.views { margin: 6px 0 0 11px; }

.taskbar { display: flex; align-items: center; height: 60px; padding-bottom: 2px; border-top: 1px solid #cfc8cc; color: #1b1b1b; font-size: 15px;
  background: linear-gradient(90deg, #efd9da 0, #ead7da 190px, #ded8e5 290px, #e1d7de 410px, #d0deea 470px, #d1dce9 900px, #dadce9 980px, #e6dbe3 1060px, #dcdce8 1130px, #f2dde1 1190px, #dcdfec 1255px, #d5e3ef 1340px, #f6e2dd 1385px, #f7e2df 1450px, #ebdfe8 1480px, #f7e2de 1520px, #f9e6df 1635px, #d8dfec 1670px, #d3dfea 1760px, #d7dcea 1860px, #e5d7ea 1915px); }
.defs { position: absolute; }
.weather { margin-left: 23px; }
.start { margin-left: 444px; }
.search { display: flex; align-items: center; width: 123px; height: 38px; margin-left: 18px; padding-left: 29px; border-radius: 19px; background: #f1f4f9; box-shadow: 0 1px 1px #c5cdd8; }
.search svg { margin-right: 5px; }
.search span { margin-top: -1px; margin-left: -1px; }
.apps { display: flex; margin-left: 5px; }
.app { position: relative; width: 55px; height: 48px; display: flex; align-items: center; justify-content: center; }
.app.active { width: 48px; margin-left: 3px; background: #fbf2ef; border-radius: 4px; box-shadow: 0 0 1px #cdbcb8; }
.app.open::after, .app.active::after { content: ""; position: absolute; bottom: 0; width: 8px; height: 4px; border-radius: 2px; background: #7d8287; }
.app.active::after { width: 20px; background: #64788a; }
.tray { display: flex; align-items: center; margin-left: auto; margin-right: 24px; height: 58px; }
.lang { display: flex; flex-direction: column; align-items: center; width: 30px; margin: -2px 22px 0 20px; line-height: 20px; }
.sys { margin-right: 17px; }
.clock { display: flex; flex-direction: column; align-items: flex-end; margin-top: -3px; line-height: 20px; }
.badge { width: 20px; height: 20px; margin-left: 10px; border-radius: 50%; background: #5f7782; color: #fff; text-align: center; font-size: 12.500px; line-height: 20px; }
</style>
